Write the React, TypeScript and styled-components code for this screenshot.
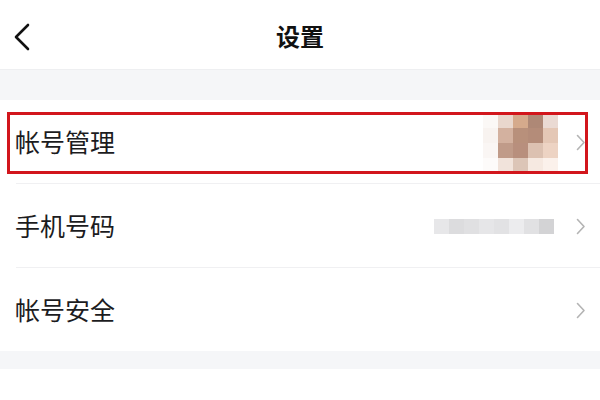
import React from 'react';
import styled, { createGlobalStyle } from 'styled-components';

const GlobalStyle = createGlobalStyle`
  html, body {
    margin: 0;
    padding: 0;
    background: #ffffff;
  }

  body {
    font-family: 'Noto Sans CJK SC', 'Noto Sans', sans-serif;
    color: #1a1a1a;
  }
`;

interface ISettingItem {
  label: string;
  value?: 'avatar' | 'phone';
  highlighted?: boolean;
}

const items: ISettingItem[] = [
  { label: '帐号管理', value: 'avatar', highlighted: true },
  { label: '手机号码', value: 'phone' },
  { label: '帐号安全' },
];

// pixelated avatar, row by row
const avatarCells = [
  ['#fbf8f6', '#e9d7cd', '#d5aa8c', '#ae8876', '#eadad3'],
  ['#f8f3f0', '#d3b19f', '#b8907b', '#b48c79', '#e4c7b5'],
  ['#faf6f4', '#c09b89', '#b88f7d', '#dcc1b1', '#edd3c3'],
  ['#fdfbfa', '#f1e3db', '#dcc5b7', '#f6e9e1', '#fbf1eb'],
];

const phoneCells = ['#e7e7e9', '#dcdcde', '#e0e0e2', '#e6e6e8', '#e2e2e4', '#ececee', '#e1e1e3', '#d3d3d5'];

export default function App() {
  return (
    <>
      <GlobalStyle />
      <Page>
        <Header>
          <BackButton aria-label="返回">
            <svg width="16" height="28" viewBox="0 0 16 28" fill="none">
              <polyline
                points="14,2 2,14 14,26"
                stroke="#111111"
                strokeWidth="2.6"
                strokeLinecap="round"
                strokeLinejoin="round"
              />
            </svg>
          </BackButton>
          <Title children="设置" />
        </Header>

        <Spacer $height={30} />

        <List>
          {items.map((item, index) => (
            <Row key={item.label} $last={index === items.length - 1}>
              <Label children={item.label} />

              <Right>
                {item.value === 'avatar' && (
                  <Avatar>
                    {avatarCells.flat().map((color, i) => (
                      <Cell key={i} $color={color} />
                    ))}
                  </Avatar>
                )}

                {item.value === 'phone' && (
                  <Phone>
                    {phoneCells.map((color, i) => (
                      <Cell key={i} $color={color} />
                    ))}
                  </Phone>
                )}

                <Chevron width="10" height="17" viewBox="0 0 10 17" fill="none">
                  <polyline
                    points="1.5,1.5 8,8.5 1.5,15.5"
                    stroke="#b4b4b4"
                    strokeWidth="1.6"
                    strokeLinecap="round"
                    strokeLinejoin="round"
                  />
                </Chevron>
              </Right>

              {item.highlighted && <Highlight />}
            </Row>
          ))}
        </List>

        <Spacer $height={18} />
      </Page>
    </>
  );
}

const Page = styled.div`
  width: 600px;
  height: 400px;
  overflow: hidden;
  background: #ffffff;
`;

const Header = styled.header`
  position: relative;
  height: 69px;
  display: flex;
  align-items: center;
  justify-content: center;
  border-bottom: 1px solid #eeeff1;
`;

const BackButton = styled.button`
  position: absolute;
  left: 14px;
  top: 23px;
  padding: 0;
  border: none;
  background: none;
  display: flex;
`;

const Title = styled.h1`
  margin: 0;
  font-size: 24px;
  font-weight: 700;
  line-height: 1;
  color: #111111;
  padding-top: 2px;
`;

const Spacer = styled.div<{ $height: number }>`
  height: ${({ $height }) => $height}px;
  background: #f5f6f8;
`;

const List = styled.ul`
  list-style: none;
  margin: 0;
  padding: 0;
`;

const Row = styled.li<{ $last?: boolean }>`
  position: relative;
  height: 83px;
  display: flex;
  align-items: center;
  justify-content: space-between;
  padding: 0 14px 0 15px;

  &::after {
    content: '';
    display: ${({ $last }) => ($last ? 'none' : 'block')};
    position: absolute;
    left: 16px;
    right: 0;
    bottom: -1px;
    height: 1px;
    background: #f0f0f2;
  }

  & + & {
    margin-top: 1px;
  }
`;

const Label = styled.span`
  font-size: 25px;
  line-height: 1;
  color: #1c1c1e;
`;

const Right = styled.div`
  display: flex;
  align-items: center;
`;

const Avatar = styled.div`
  display: grid;
  grid-template-columns: repeat(5, 15px);
  grid-auto-rows: 15px;
  margin-right: 18px;
  margin-top: 3px;
`;

const Phone = styled.div`
  display: grid;
  grid-template-columns: repeat(8, 15px);
  grid-auto-rows: 15px;
  margin-right: 22px;
  margin-top: 2px;
`;

const Cell = styled.div<{ $color: string }>`
  background: ${({ $color }) => $color};
`;

const Chevron = styled.svg`
  display: block;
  margin-top: 1px;
`;

const Highlight = styled.div`
  position: absolute;
  left: 7px;
  right: 12px;
  top: 12px;
  bottom: 9px;
  border: 3px solid #d2161c;
  pointer-events: none;
`;
